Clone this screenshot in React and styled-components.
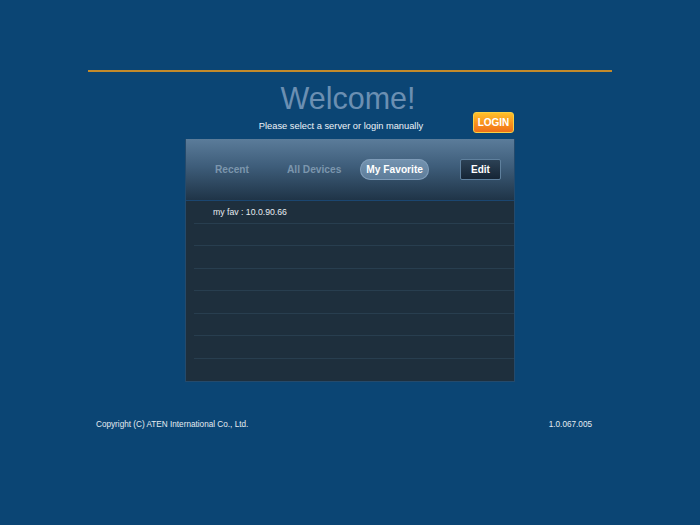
import React from 'react'
import styled, { createGlobalStyle } from 'styled-components'

const GlobalStyle = createGlobalStyle`
    html, body {
        margin: 0;
        padding: 0;
        background-color: #0b4574;
        font-family: "Liberation Sans", Arial, sans-serif;
    }
`

const Page = styled.div`
    width: 700px;
    height: 525px;
    background-color: #0b4574;
    display: flex;
    flex-direction: column;
    align-items: center;
    padding-top: 70px;
    box-sizing: border-box;
`

const Rule = styled.div`
    width: 524px;
    height: 2px;
    background-color: #c48a2a;
`

const Title = styled.h1`
    margin: 13px 4px 0 0;
    font-size: 30.5px;
    font-weight: normal;
    line-height: 27px;
    color: #6b8fb2;
`

const HeadRow = styled.div`
    width: 330px;
    display: grid;
    grid-template-columns: 1fr auto 1fr;
    align-items: end;
`

const Subtitle = styled.span`
    grid-column: 2;
    font-size: 9.3px;
    line-height: 11px;
    color: #eef3f8;
    margin-right: 18px;
    padding-bottom: 1px;
`

const LoginButton = styled.button`
    grid-column: 3;
    justify-self: end;
    width: 41px;
    height: 21px;
    margin-right: 1px;
    padding: 0;
    border: 1px solid #f9d043;
    border-radius: 3px;
    background: linear-gradient(#ffc02a, #f8911c 55%, #f07019);
    color: #fff;
    font-family: "Liberation Sans", Arial, sans-serif;
    font-size: 10px;
    font-weight: bold;
`

const Panel = styled.div`
    width: 330px;
    margin-top: 6px;
    background-color: #1e2f3d;
    border: 1px solid #244a6c;
    border-top: none;
    box-sizing: border-box;
`

const PanelHeader = styled.div`
    height: 62px;
    background: linear-gradient(#5b7c9a, #3e5d7a 45%, #1f3447);
    border-bottom: 1px solid #1b4670;
    display: flex;
    align-items: center;
    padding: 0 13px 0 0;
    box-sizing: border-box;
`

const Tab = styled.span`
    height: 21px;
    line-height: 21px;
    padding: 0 6px;
    margin-left: ${p => p.gap}px;
    border-radius: 11px;
    font-size: 10.2px;
    font-weight: bold;
    color: ${p => (p.active ? '#ffffff' : '#7c96ad')};
    background: ${p => (p.active ? 'linear-gradient(#7594b1, #5c7b98)' : 'none')};
    box-shadow: ${p => (p.active ? 'inset 0 0 0 1px #7f9cb8' : 'none')};
`

const EditButton = styled.button`
    margin-left: auto;
    width: 41px;
    height: 21px;
    padding: 0;
    border: 1px solid #5f809d;
    border-radius: 2px;
    background: linear-gradient(#2c4155, #152535);
    color: #fff;
    font-family: "Liberation Sans", Arial, sans-serif;
    font-size: 10px;
    font-weight: bold;
`

const List = styled.div`
    display: flex;
    flex-direction: column;
`

const Row = styled.div`
    height: 22.5px;
    margin-left: 8px;
    border-bottom: ${p => (p.last ? 'none' : '1px solid #283e4f')};
    box-sizing: border-box;
    display: flex;
    align-items: center;
    padding-left: 19px;
    padding-top: 1px;
    font-size: 8.7px;
    color: #e6ecf2;
`

const Footer = styled.div`
    width: 524px;
    box-sizing: border-box;
    padding: 0 20px 0 8px;
    margin-top: 38px;
    display: flex;
    justify-content: space-between;
    font-size: 8.2px;
    color: #e6ecf2;
`

const rows = ['my fav : 10.0.90.66', '', '', '', '', '', '', '']

function App() {
    return (
        <Page>
            <GlobalStyle />
            <Rule />
            <Title>Welcome!</Title>
            <HeadRow>
                <Subtitle>Please select a server or login manually</Subtitle>
                <LoginButton>LOGIN</LoginButton>
            </HeadRow>
            <Panel>
                <PanelHeader>
                    <Tab gap={23}>Recent</Tab>
                    <Tab gap={26}>All Devices</Tab>
                    <Tab gap={13} active>My Favorite</Tab>
                    <EditButton>Edit</EditButton>
                </PanelHeader>
                <List>
                    {rows.map((r, i) => (
                        <Row key={i} last={i === rows.length - 1}>{r}</Row>
                    ))}
                </List>
            </Panel>
            <Footer>
                <span>Copyright (C) ATEN International Co., Ltd.</span>
                <span>1.0.067.005</span>
            </Footer>
        </Page>
    )
}

export default App
